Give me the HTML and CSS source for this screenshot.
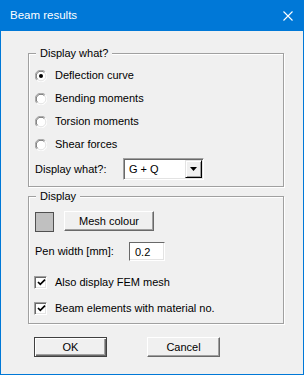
FILE: index.html
```html
<!DOCTYPE html>
<html lang="en">
  <head>
    <meta charset="UTF-8" />
    <title>Beam results</title>
    <link rel="stylesheet" href="styles.css">
  </head>
  <body>
    <div class="dialog">
      <!-- [1] Title bar -->
      <div class="titlebar">
        <span class="title">Beam results</span>
        <svg class="close" width="10" height="10" viewBox="0 0 10 10" aria-hidden="true">
          <path d="M0.5 0.5 L9.5 9.5 M9.5 0.5 L0.5 9.5" stroke="#fff" stroke-width="1.1" fill="none" />
        </svg>
      </div>

      <!-- [2] Body -->
      <div class="dialog-body">
        <div class="group group-what">
          <div class="group-title">Display what?</div>
          <div class="radios">
            <div class="row radio-row">
              <svg class="radio" width="12" height="12" viewBox="0 0 12 12">
                <circle cx="6" cy="6" r="5.5" fill="#fff" />
                <path d="M1.8 10.2 A5.9 5.9 0 0 1 10.2 1.8" stroke="#a0a0a0" fill="none" />
                <path d="M2.6 9.4 A4.8 4.8 0 0 1 9.4 2.6" stroke="#696969" fill="none" />
                <path d="M10.2 1.8 A5.9 5.9 0 0 1 1.8 10.2" stroke="#fff" fill="none" />
                <path d="M9.4 2.6 A4.8 4.8 0 0 1 2.6 9.4" stroke="#e3e3e3" fill="none" />
                <circle cx="6" cy="6" r="2" fill="#000" />
              </svg>
              <span>Deflection curve</span>
            </div>
            <div class="row radio-row">
              <svg class="radio" width="12" height="12" viewBox="0 0 12 12">
                <circle cx="6" cy="6" r="5.5" fill="#fff" />
                <path d="M1.8 10.2 A5.9 5.9 0 0 1 10.2 1.8" stroke="#a0a0a0" fill="none" />
                <path d="M2.6 9.4 A4.8 4.8 0 0 1 9.4 2.6" stroke="#696969" fill="none" />
                <path d="M10.2 1.8 A5.9 5.9 0 0 1 1.8 10.2" stroke="#fff" fill="none" />
                <path d="M9.4 2.6 A4.8 4.8 0 0 1 2.6 9.4" stroke="#e3e3e3" fill="none" />
              </svg>
              <span>Bending moments</span>
            </div>
            <div class="row radio-row">
              <svg class="radio" width="12" height="12" viewBox="0 0 12 12">
                <circle cx="6" cy="6" r="5.5" fill="#fff" />
                <path d="M1.8 10.2 A5.9 5.9 0 0 1 10.2 1.8" stroke="#a0a0a0" fill="none" />
                <path d="M2.6 9.4 A4.8 4.8 0 0 1 9.4 2.6" stroke="#696969" fill="none" />
                <path d="M10.2 1.8 A5.9 5.9 0 0 1 1.8 10.2" stroke="#fff" fill="none" />
                <path d="M9.4 2.6 A4.8 4.8 0 0 1 2.6 9.4" stroke="#e3e3e3" fill="none" />
              </svg>
              <span>Torsion moments</span>
            </div>
            <div class="row radio-row">
              <svg class="radio" width="12" height="12" viewBox="0 0 12 12">
                <circle cx="6" cy="6" r="5.5" fill="#fff" />
                <path d="M1.8 10.2 A5.9 5.9 0 0 1 10.2 1.8" stroke="#a0a0a0" fill="none" />
                <path d="M2.6 9.4 A4.8 4.8 0 0 1 9.4 2.6" stroke="#696969" fill="none" />
                <path d="M10.2 1.8 A5.9 5.9 0 0 1 1.8 10.2" stroke="#fff" fill="none" />
                <path d="M9.4 2.6 A4.8 4.8 0 0 1 2.6 9.4" stroke="#e3e3e3" fill="none" />
              </svg>
              <span>Shear forces</span>
            </div>
          </div>

          <div class="row combo-row">
            <span class="label label-what">Display what?:</span>
            <div class="combo">
              <span class="combo-value">G + Q</span>
              <span class="combo-button">
                <svg width="7" height="4" viewBox="0 0 7 4"><path d="M0 0 H7 L3.5 4 Z" fill="#000" /></svg>
              </span>
            </div>
          </div>
        </div>

        <div class="group group-display">
          <div class="group-title">Display</div>

          <div class="row colour-row">
            <span class="swatch"></span>
            <span class="button button-mesh">Mesh colour</span>
          </div>

          <div class="row pen-row">
            <span class="label label-pen">Pen width [mm]:</span>
            <span class="field">0.2</span>
          </div>

          <div class="row check-row">
            <span class="checkbox">
              <svg width="9" height="9" viewBox="0 0 9 9"><path d="M1 4 L3.3 6.4 L8 1.6" stroke="#000" stroke-width="1.7" fill="none" /></svg>
            </span>
            <span>Also display FEM mesh</span>
          </div>
          <div class="row check-row">
            <span class="checkbox">
              <svg width="9" height="9" viewBox="0 0 9 9"><path d="M1 4 L3.3 6.4 L8 1.6" stroke="#000" stroke-width="1.7" fill="none" /></svg>
            </span>
            <span>Beam elements with material no.</span>
          </div>
        </div>

        <div class="actions">
          <span class="button button-default">OK</span>
          <span class="button">Cancel</span>
        </div>
      </div>
    </div>
  </body>
</html>
```

FILE: styles.css
```css
/*
  Global styles
*/

* {
  margin: 0;
  padding: 0;
  box-sizing: border-box;
}
:root {
  --blue: #0078d7;
  --face: #f0f0f0;
  --shadow: #a0a0a0;
  --dark: #696969;
  --light: #e3e3e3;
}
body {
  background-color: var(--face);
  font-family: "Liberation Sans", Arial, sans-serif;
  font-size: 11px;
  line-height: 13px;
  color: #000;
}

/*
  Window
*/

.dialog {
  width: 304px;
  height: 375px;
  background-color: var(--face);
}
.titlebar {
  height: 31px;
  display: flex;
  align-items: center;
  justify-content: space-between;
  padding: 0 11px 0 10px;
  color: #fff;
  background-color: var(--blue);
}
.title {
  font-size: 11.5px;
  padding-bottom: 1px;
}
.dialog-body {
  height: 344px;
  border: 1px solid var(--blue);
  border-top: 0;
  padding-top: 22px;
}

/*
  Group boxes
*/

.group {
  width: 256px;
  margin-left: 27px;
  padding: 0 6px;
  border: 1px solid var(--shadow);
  box-shadow: inset 1px 1px #fff, 1px 1px #fff;
}
.group-what {
  height: 134px;
}
.group-display {
  height: 128px;
  margin-top: 9px;
}
.group-title {
  width: fit-content;
  margin: -7px 0 0 1px;
  padding: 0 4px;
  background-color: var(--face);
}

.row {
  display: flex;
  align-items: center;
}
.radios {
  margin-top: 4px;
}
.radio-row {
  height: 23px;
  gap: 8px;
}
.radio {
  flex: none;
}

.label-what {
  width: 88px;
}
.combo-row {
  margin-top: 2px;
  height: 22px;
}
.combo {
  width: 81px;
  height: 22px;
  display: flex;
  align-items: center;
  justify-content: space-between;
  padding: 1px;
  background-color: #fff;
  border: 1px solid;
  border-color: var(--shadow) #fff #fff var(--shadow);
  box-shadow: inset 1px 1px var(--dark), inset -1px -1px var(--light);
}
.combo-value {
  padding-left: 4px;
}
.combo-button {
  width: 17px;
  height: 18px;
  display: grid;
  place-items: center;
  background-color: var(--face);
  border: 1px solid;
  border-color: var(--light) #000 #000 var(--light);
  box-shadow: inset 1px 1px #fff, inset -1px -1px var(--shadow);
}

/*
  Display group
*/

.colour-row {
  margin-top: 8px;
  height: 20px;
  align-items: flex-start;
  gap: 10px;
}
.swatch {
  width: 19px;
  height: 20px;
  margin-top: 1px;
  background-color: #c0c0c0;
  border: 1px solid #505050;
}
.button {
  height: 20px;
  width: 73px;
  display: grid;
  place-items: center;
  background-color: var(--face);
  border: 1px solid;
  border-color: #fff var(--dark) var(--dark) #fff;
  box-shadow: inset -1px -1px var(--shadow);
}
.button-mesh {
  width: 90px;
}
.button-default {
  border-color: #404040;
  box-shadow: inset 1px 1px #fff, inset -1px -1px var(--dark), inset -2px -2px var(--shadow);
}

.pen-row {
  margin-top: 11px;
  height: 19px;
}
.label-pen {
  width: 94px;
}
.field {
  width: 36px;
  height: 19px;
  padding: 3px 0 0 5px;
  background-color: #fff;
  border: 1px solid;
  border-color: var(--dark) #fff #fff var(--dark);
  box-shadow: inset -1px -1px var(--light);
}

.check-row {
  height: 20px;
  gap: 8px;
  margin-top: 6px;
  margin-left: -1px;
}
.pen-row + .check-row {
  margin-top: 11px;
}
.checkbox {
  width: 13px;
  height: 13px;
  display: grid;
  place-items: center;
  padding: 1px 0 0 1px;
  background-color: #fff;
  border: 1px solid;
  border-color: var(--shadow) #fff #fff var(--shadow);
  box-shadow: inset 1px 1px var(--dark), inset -1px -1px var(--light);
}

/*
  Buttons
*/

.actions {
  display: flex;
  gap: 40px;
  margin: 13px 0 0 33px;
}
```
